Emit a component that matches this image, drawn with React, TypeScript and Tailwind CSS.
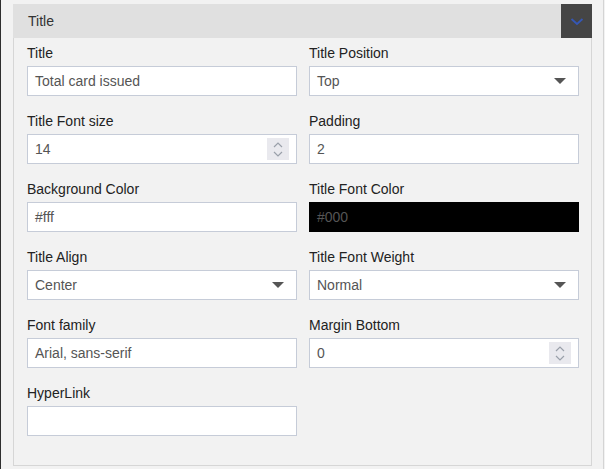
import React from 'react'

const font = { fontFamily: '"Liberation Sans", Arial, sans-serif' }

function Caret() {
  return (
    <svg width="12" height="6" viewBox="0 0 12 6" className="shrink-0">
      <path d="M0 0 L12 0 L6 6 Z" fill="#555" />
    </svg>
  )
}

function Spinner() {
  return (
    <div className="w-[22px] h-[22px] bg-[#e9e9ee] flex flex-col items-center justify-center gap-[3px] shrink-0">
      <svg width="10" height="6" viewBox="0 0 10 6">
        <path d="M1 5 L5 1 L9 5" stroke="#9aa0aa" strokeWidth="1.2" fill="none" />
      </svg>
      <svg width="10" height="6" viewBox="0 0 10 6">
        <path d="M1 1 L5 5 L9 1" stroke="#9aa0aa" strokeWidth="1.2" fill="none" />
      </svg>
    </div>
  )
}

type Field = {
  label: string
  value: string
  kind?: 'select' | 'number' | 'dark' | 'text'
}

const fields: Array<Field | null> = [
  { label: 'Title', value: 'Total card issued' },
  { label: 'Title Position', value: 'Top', kind: 'select' },
  { label: 'Title Font size', value: '14', kind: 'number' },
  { label: 'Padding', value: '2' },
  { label: 'Background Color', value: '#fff' },
  { label: 'Title Font Color', value: '#000', kind: 'dark' },
  { label: 'Title Align', value: 'Center', kind: 'select' },
  { label: 'Title Font Weight', value: 'Normal', kind: 'select' },
  { label: 'Font family', value: 'Arial, sans-serif' },
  { label: 'Margin Bottom', value: '0', kind: 'number' },
  { label: 'HyperLink', value: '' },
  null,
]

function FieldBox({ field }: { field: Field }) {
  const dark = field.kind === 'dark'
  return (
    <div className="flex flex-col">
      <label className="text-[14px] leading-[20px] text-[#222] mb-[3px]">{field.label}</label>
      <div
        className={`h-[30px] flex items-center pl-[7px] pr-[7px] border ${
          dark ? 'bg-black border-black text-[#555]' : 'bg-white border-[#c6ccd8] text-[#555]'
        }`}
      >
        <span className="flex-1 text-[14px] leading-[20px]">{field.value}</span>
        {field.kind === 'select' && <span className="mr-[5px]"><Caret /></span>}
        {field.kind === 'number' && <Spinner />}
      </div>
    </div>
  )
}

export default function App() {
  return (
    <div
      className="w-[605px] h-[469px] bg-[#f2f2f2] border-l border-l-[#2e2e2e] flex overflow-hidden"
      style={font}
    >
      <div className="pl-[12px] pt-[4px] w-[591px] flex flex-col">
        <div className="h-[34px] bg-[#e0e0e0] flex items-center">
          <span className="flex-1 pl-[15px] text-[14px] text-[#333]">Title</span>
          <div className="w-[31px] h-[34px] bg-[#454545] flex items-center justify-center">
            <svg width="14" height="9" viewBox="0 0 14 9">
              <path d="M1.5 2 L7 7 L12.5 2" stroke="#3557b5" strokeWidth="1.8" fill="none" />
            </svg>
          </div>
        </div>
        <div className="border border-t-0 border-[#d6d6d6] pl-[13px] pr-[12px] pt-[5px] pb-[29px] grid grid-cols-2 gap-x-[12px] gap-y-[15px]">
          {fields.map((f, i) => (f ? <FieldBox key={i} field={f} /> : <div key={i} />))}
        </div>
        <div className="mt-[4px] h-[10px] bg-[#e0e0e0]" />
      </div>
      <div className="ml-[11px] w-px h-full bg-[#d4d4d4]" />
    </div>
  )
}
